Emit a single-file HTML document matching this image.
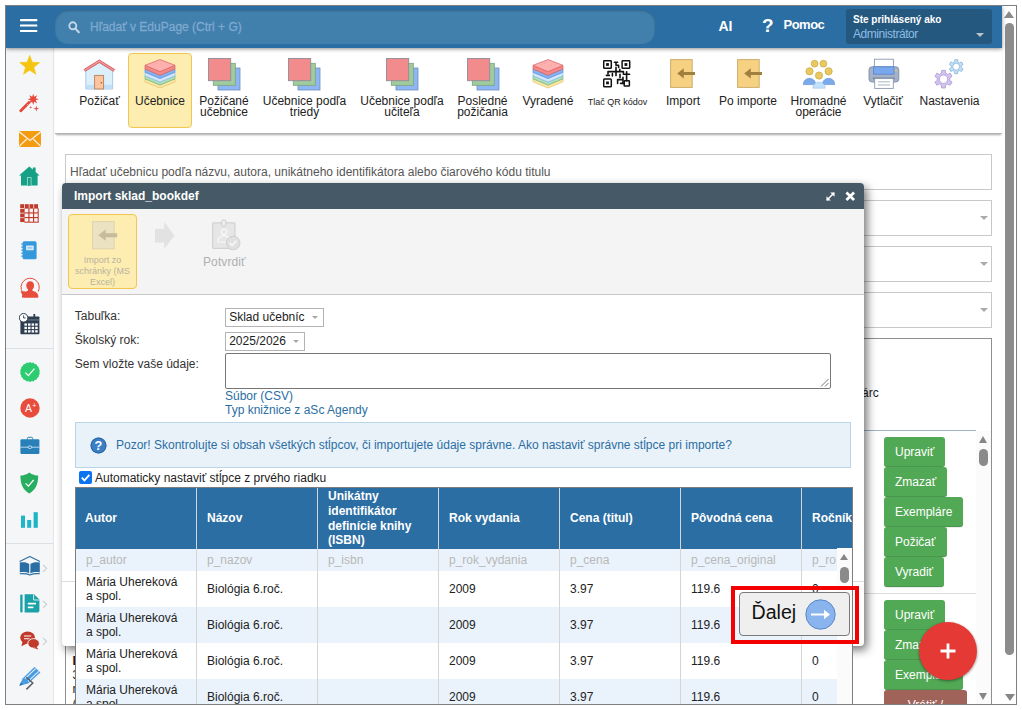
<!DOCTYPE html>
<html lang="sk">
<head>
<meta charset="utf-8">
<title>EduPage - Import</title>
<style>
*{box-sizing:border-box;margin:0;padding:0}
html,body{width:1022px;height:710px;overflow:hidden;background:#fff}
body{font-family:"Liberation Sans",sans-serif;font-size:12px;color:#333;position:relative}
.abs{position:absolute}
#frame{position:absolute;left:5px;top:5px;width:1012px;height:700px;border:1px solid #7e7e7e;overflow:hidden;background:#fff}
/* everything inside #frame is positioned in page coordinates minus (6,6) => use wrapper shifted */
#pg{position:absolute;left:-6px;top:-6px;width:1022px;height:710px}
#hdr{left:6px;top:6px;width:996px;height:42px;background:#2b6ea3;box-shadow:0 1px 4px rgba(0,0,0,.45);z-index:5}
#hsearch{left:55px;top:10px;width:600px;height:34px;border-radius:13px;background:#417fad;box-shadow:inset 0 1px 2px rgba(0,0,0,.22)}
#hsearch span{position:absolute;left:35px;top:10px;font-size:12px;color:#7faacf;white-space:nowrap;-webkit-text-stroke:.3px #7faacf}
.hw{color:#fff;font-weight:bold;white-space:nowrap}
#ubox{left:846px;top:9px;width:146px;height:35px;background:#24587f;border-radius:3px}
#side{left:6px;top:48px;width:48px;height:657px;background:#f5f6f8;border-right:1px solid #e3e5e8}
.sep{position:absolute;left:0;width:48px;height:1px;background:#dcdfe3}
.si{position:absolute;left:12px;width:24px;height:24px}
#ribbon{left:55px;top:48px;width:947px;height:86px;background:#fff;border-bottom:1px solid #b4b4b4;box-shadow:0 2px 2px -1px rgba(0,0,0,.35)}
.rb{position:absolute;top:96px;text-align:center;line-height:10.6px;font-size:12px;color:#222;white-space:nowrap;transform:translateX(-50%)}
.ri{position:absolute;top:58px;width:32px;height:32px}
.inp{position:absolute;left:65px;width:927px;height:36px;border:1px solid #c8c8c8;background:#fff}
.inp i{position:absolute;right:3.500px;top:15px;width:0;height:0;border-left:4px solid transparent;border-right:4px solid transparent;border-top:4px solid #aaa}
.gb{position:absolute;left:884px;height:29.600px;background:#52a955;border-radius:3px;color:#fff;font-size:12px;line-height:30.5px;padding-left:11px;white-space:nowrap;box-shadow:inset 0 -1px 0 rgba(0,0,0,.1),0 0.5px 0.5px rgba(0,0,0,.15)}
#dlg{left:62px;top:183px;width:802px;height:463px;background:#fff;box-shadow:3px 4px 10px 0 rgba(0,0,0,.55);border-radius:4px}
#dtitle{left:0;top:0;width:802px;height:26px;background:#455a66;border-radius:4px 4px 0 0;color:#fff;font-weight:bold;font-size:12px;line-height:27px;padding-left:12px}
#dtool{left:0;top:26px;width:802px;height:86px;background:#f4f4f4;border-bottom:1px solid #c8c8c8}
.lbl{position:absolute;left:12.800px;font-size:12px;color:#333;white-space:nowrap}
.sel{position:absolute;left:163px;height:19px;border:1px solid #b4b4b4;background:#fff;font-size:12px;line-height:17.500px;padding-left:3.200px;color:#222;white-space:nowrap}
.sel i{position:absolute;right:5px;top:7.500px;width:0;height:0;border-left:3.500px solid transparent;border-right:3.500px solid transparent;border-top:3.800px solid #a8a8a8}
.lnk{position:absolute;left:163px;color:#2b6ea3;font-size:12px;white-space:nowrap}
#tbl{left:75px;top:487px;width:778px;height:220px;overflow:hidden;background:#fff;border:1px solid #7d7d7d}
#tbl .th{position:absolute;top:0;height:61.200px;background:#2b6ea3;color:#fff;font-weight:bold;font-size:12px;border-left:1px solid #d5d5d5;padding-left:10px;line-height:14.6px;display:flex;align-items:center}
.row{position:absolute;left:0;width:761px}
.row span{position:absolute;top:0;height:100%;border-left:1px solid #d5d5d5;padding-left:10px;font-size:12px;color:#222;display:flex;align-items:center;line-height:14px;white-space:nowrap}
.row span:first-child{border-left:none}
.alt{background:#eaf3fc}
.ph span{color:#b8b8b8}
</style>
</head>
<body>
<div id="frame"><div id="pg">

<!-- HEADER -->
<div id="hdr" class="abs"></div>
<div class="abs" style="z-index:6;left:0;top:0">
  <svg class="abs" style="left:20px;top:19px" width="18" height="14" viewBox="0 0 18 14"><rect x="0" y="0.100" width="17.300" height="2.100" rx=".4" fill="#fff"/><rect x="0" y="5.500" width="17.300" height="2.100" rx=".4" fill="#fff"/><rect x="0" y="10.900" width="17.300" height="2.100" rx=".4" fill="#fff"/></svg>
  <div id="hsearch" class="abs">
    <svg class="abs" style="left:12.500px;top:11px;opacity:.68" width="12" height="13" viewBox="0 0 12 13"><circle cx="4.800" cy="4.800" r="3.500" fill="none" stroke="#fff" stroke-width="1.900"/><path d="M7.400 7.600l3.400 3.600" stroke="#fff" stroke-width="2.100" stroke-linecap="round"/></svg>
    <span>Hľadať v EduPage (Ctrl + G)</span>
  </div>
  <div class="abs hw" style="left:718.500px;top:17.500px;font-size:14px">AI</div>
  <div class="abs hw" style="left:762px;top:14.500px;font-size:19px">?</div>
  <div class="abs hw" style="left:783.500px;top:17px;font-size:13px;letter-spacing:-.5px">Pomoc</div>
  <div id="ubox" class="abs">
    <div class="abs hw" style="left:7px;top:5px;font-size:10px;letter-spacing:0">Ste prihlásený ako</div>
    <div class="abs" style="left:7px;top:18px;font-size:12px;color:#8fbde6;letter-spacing:-.45px">Administrátor</div>
    <i class="abs" style="left:130px;top:24px;width:0;height:0;border-left:4px solid transparent;border-right:4px solid transparent;border-top:4px solid #b9c4cc"></i>
  </div>
</div>

<!-- OUTER SCROLLBAR -->
<div class="abs" style="left:1002px;top:6px;width:14px;height:699px;background:#fff">
  <i class="abs" style="left:2px;top:5px;width:0;height:0;border-left:5px solid transparent;border-right:5px solid transparent;border-bottom:7px solid #8a8a8a"></i>
  <div class="abs" style="left:3.300px;top:17px;width:8.600px;height:632px;border-radius:4.300px;background:#8c8c8c"></div>
  <i class="abs" style="left:2.500px;top:688px;width:0;height:0;border-left:5px solid transparent;border-right:5px solid transparent;border-top:7px solid #868686"></i>
</div>

<!-- SIDEBAR -->
<div id="side" class="abs">
  <div class="sep" style="top:300px"></div>
  <div class="sep" style="top:495px"></div>
</div>

<!-- SIDEBAR ICONS -->
<svg class="abs" style="left:19px;top:54px" width="22" height="22" viewBox="0 0 22 22"><path d="M10.70 1.30L13.29 8.24L20.69 8.56L14.88 13.16L16.87 20.29L10.70 16.20L4.53 20.29L6.52 13.16L0.71 8.56L8.11 8.24Z" fill="#f5c40f" stroke="#f5c40f" stroke-width=".6" stroke-linejoin="round"/></svg>
<svg class="abs" style="left:19px;top:92px" width="22" height="21" viewBox="0 0 22 21"><path d="M1.800 18.800L10 10.400" stroke="#e8493a" stroke-width="2.800" stroke-linecap="round"/><path d="M8.300 12.200l1.700 1.700" stroke="#f5f6f8" stroke-width=".7"/><path d="M14.20 1.70L15.23 4.81L18.16 3.34L16.69 6.27L19.80 7.30L16.69 8.33L18.16 11.26L15.23 9.79L14.20 12.90L13.17 9.79L10.24 11.26L11.71 8.33L8.60 7.30L11.71 6.27L10.24 3.34L13.17 4.81Z" fill="#e8493a"/><path d="M17.30 13.60L17.94 15.96L20.30 16.60L17.94 17.24L17.30 19.60L16.66 17.24L14.30 16.60L16.66 15.96Z" fill="#e8493a"/><path d="M11.80 13.70L12.15 15.05L13.50 15.40L12.15 15.75L11.80 17.10L11.45 15.75L10.10 15.40L11.45 15.05Z" fill="#e8493a"/></svg>
<svg class="abs" style="left:18.5px;top:131px" width="22" height="16" viewBox="0 0 22 16"><rect x="0" y="0" width="22" height="16" fill="#f39c12"/><path d="M0 0.6L11 9.4 22 0.6" fill="none" stroke="#fdf1dc" stroke-width="1.3"/><path d="M0 15.6L7.8 8M22 15.6L14.2 8" stroke="#fdf1dc" stroke-width="1.1"/></svg>
<svg class="abs" style="left:19px;top:166px" width="21" height="20" viewBox="0 0 21 20"><path d="M0 9.6L10.3 0.6 13.8 3.6V1.4H16.6V6L20.6 9.6H18.6V19.6H2V9.6Z" fill="#16a085"/><rect x="8" y="11" width="4.6" height="8.6" fill="#8fd3c5"/><rect x="9" y="12" width="2.6" height="7.6" fill="#16a085"/></svg>
<svg class="abs" style="left:20.300px;top:204.400px" width="19" height="19" viewBox="0 0 19 19"><rect x="4.30" y="4.30" width="14.40" height="14.40" fill="#c0392b"/><rect x="0.20" y="0.20" width="3.900" height="3.900" fill="#c0392b"/><rect x="4.85" y="0.20" width="3.900" height="3.900" fill="#c0392b"/><rect x="9.50" y="0.20" width="3.900" height="3.900" fill="#c0392b"/><rect x="14.15" y="0.20" width="3.900" height="3.900" fill="#c0392b"/><rect x="0.20" y="4.85" width="3.900" height="3.900" fill="#c0392b"/><rect x="4.85" y="4.85" width="3.500" height="3.500" fill="#fdf4f3"/><rect x="9.50" y="4.85" width="3.500" height="3.500" fill="#fdf4f3"/><rect x="14.15" y="4.85" width="3.500" height="3.500" fill="#fdf4f3"/><rect x="0.20" y="9.50" width="3.900" height="3.900" fill="#c0392b"/><rect x="4.85" y="9.50" width="3.500" height="3.500" fill="#fdf4f3"/><rect x="9.50" y="9.50" width="3.500" height="3.500" fill="#fdf4f3"/><rect x="14.15" y="9.50" width="3.500" height="3.500" fill="#fdf4f3"/><rect x="0.20" y="14.15" width="3.900" height="3.900" fill="#c0392b"/><rect x="4.85" y="14.15" width="3.500" height="3.500" fill="#fdf4f3"/><rect x="9.50" y="14.15" width="3.500" height="3.500" fill="#fdf4f3"/><rect x="14.15" y="14.15" width="3.500" height="3.500" fill="#fdf4f3"/></svg>
<svg class="abs" style="left:21px;top:240.800px" width="16" height="19" viewBox="0 0 16 19"><rect x="1.600" y="0.300" width="14" height="18" rx="1.600" fill="#3498db"/><rect x="5" y="4.600" width="7.800" height="4.600" rx=".6" fill="#d4e9f8"/><rect x="6.600" y="6" width="4.600" height="1.700" fill="#9ccaf0"/><path d="M0.300 3.200h2.400M0.300 6.200h2.400M0.300 9.200h2.400M0.300 12.200h2.400M0.300 15.200h2.400" stroke="#3498db" stroke-width="1.200"/></svg>
<svg class="abs" style="left:19.500px;top:276.500px" width="20" height="22" viewBox="0 0 20 22"><path d="M2.600 15.400A9.100 9.100 0 1 1 18.200 14.600" fill="none" stroke="#e74c3c" stroke-width="1"/><path d="M0.400 14.400L3 18.400 5.200 14.200Z" fill="#e74c3c"/><path d="M10.200 4.200c2.400 0 3.900 1.800 3.900 4.200 0 1.600-.7 3.200-1.700 4v1.400c2.600.8 5.600 1.800 6 5.400 0 .7-.3 1.600-1 1.600H3c-.7 0-1-.9-1-1.600.4-3.600 3.400-4.600 6-5.400V12.400c-1-.8-1.700-2.400-1.700-4 0-2.400 1.500-4.200 3.900-4.200Z" fill="#e74c3c"/></svg>
<svg class="abs" style="left:19px;top:313px" width="21" height="22" viewBox="0 0 21 22"><rect x="1.4" y="3.4" width="19" height="17.8" rx=".8" fill="#2c3e50"/><rect x="14.4" y="1" width="1.8" height="4.6" fill="#2c3e50"/><rect x="8.500" y="6.600" width="11.900" height=".7" fill="#8e99a6"/><rect x="5.4" y="10.4" width="2.5" height="2.3" fill="#fff"/><rect x="9.0" y="10.4" width="2.5" height="2.3" fill="#fff"/><rect x="12.6" y="10.4" width="2.5" height="2.3" fill="#fff"/><rect x="16.2" y="10.4" width="2.5" height="2.3" fill="#fff"/><rect x="5.4" y="13.8" width="2.5" height="2.3" fill="#fff"/><rect x="9.0" y="13.8" width="2.5" height="2.3" fill="#fff"/><rect x="12.6" y="13.8" width="2.5" height="2.3" fill="#fff"/><rect x="16.2" y="13.8" width="2.5" height="2.3" fill="#fff"/><rect x="5.4" y="17.2" width="2.5" height="2.3" fill="#fff"/><rect x="9.0" y="17.2" width="2.5" height="2.3" fill="#fff"/><rect x="12.6" y="17.2" width="2.5" height="2.3" fill="#fff"/><rect x="16.2" y="17.2" width="2.5" height="2.3" fill="#fff"/><circle cx="4.6" cy="4.8" r="4.3" fill="#fff" stroke="#2c3e50" stroke-width="1"/><path d="M4.6 2.4V5h2" fill="none" stroke="#2c3e50" stroke-width=".9"/></svg>
<svg class="abs" style="left:19.5px;top:362px" width="20" height="20" viewBox="0 0 20 20"><path d="M10.00 0.00L11.60 0.94L13.42 0.60L14.60 2.03L16.43 2.34L17.05 4.09L18.66 5.00L18.65 6.85L19.85 8.26L19.20 10.00L19.85 11.74L18.65 13.15L18.66 15.00L17.05 15.91L16.43 17.66L14.60 17.97L13.42 19.40L11.60 19.06L10.00 20.00L8.40 19.06L6.58 19.40L5.40 17.97L3.57 17.66L2.95 15.91L1.34 15.00L1.35 13.15L0.15 11.74L0.80 10.00L0.15 8.26L1.35 6.85L1.34 5.00L2.95 4.09L3.57 2.34L5.40 2.03L6.58 0.60L8.40 0.94Z" fill="#2ecc71"/><circle cx="10" cy="10" r="9.3" fill="#2ecc71"/><path d="M5.400 10.600l3 3 6-7" fill="none" stroke="#fff" stroke-width="1.200"/></svg>
<svg class="abs" style="left:19.5px;top:398px" width="20" height="20" viewBox="0 0 20 20"><circle cx="10" cy="10" r="9.7" fill="#e74c3c"/><text x="8.6" y="14" font-family="Liberation Sans, sans-serif" font-size="10.5" fill="#fff" text-anchor="middle">A</text><text x="14.2" y="9.6" font-family="Liberation Sans, sans-serif" font-size="7" fill="#fff" text-anchor="middle">+</text></svg>
<svg class="abs" style="left:19.500px;top:436px" width="20" height="19" viewBox="0 0 20 19"><path d="M7.400 3.600V2.400Q7.400 1.300 8.500 1.300h3Q12.600 1.300 12.600 2.400V3.600" fill="none" stroke="#2980b9" stroke-width="1"/><rect x="0.400" y="3.200" width="19" height="14.800" rx="1.200" fill="#2980b9"/><path d="M0.400 11.200H19.400" stroke="#dcebf6" stroke-width=".8"/><ellipse cx="9.900" cy="11.200" rx="1.900" ry="1.300" fill="#2980b9" stroke="#dcebf6" stroke-width=".8"/></svg>
<svg class="abs" style="left:20px;top:471.500px" width="19" height="22" viewBox="0 0 19 22"><path d="M9.300.4C6.400 2.600 3.200 3.400.400 3.600c0 8.600 2.400 14.400 8.900 17.800 6.500-3.400 8.900-9.200 8.900-17.800C15.400 3.400 12.200 2.600 9.300.4Z" fill="#27ae60"/><path d="M5.600 11.400l2.800 2.800 5.200-6.200" fill="none" stroke="#fff" stroke-width="1.200"/></svg>
<svg class="abs" style="left:21px;top:511.5px" width="17" height="16" viewBox="0 0 17 16"><rect x="0" y="3.6" width="4" height="12.2" fill="#1cb5c9"/><rect x="6.2" y="8" width="4" height="7.800" fill="#1cb5c9"/><rect x="12.6" y="0.2" width="4.2" height="15.6" fill="#1cb5c9"/></svg>
<svg class="abs" style="left:19px;top:556px" width="22" height="20" viewBox="0 0 22 20"><path d="M0.6 5.400L10.800.5 21 5.400" fill="none" stroke="#2b6ea3" stroke-width="1.1"/><path d="M0.8 6.6c3.400-.6 7-.4 9.400 1.400V17.400c-2.400-1.400-6-1.600-9.400-1Z" fill="#2b6ea3"/><path d="M20.800 6.600c-3.400-.6-7-.4-9.400 1.400V17.400c2.400-1.400 6-1.600 9.400-1Z" fill="#2b6ea3"/><path d="M0.800 17.800c3.600-.4 6.800-.2 10 1.200 3.200-1.400 6.400-1.600 10-1.200" fill="none" stroke="#2b6ea3" stroke-width="1.100"/></svg>
<svg class="abs" style="left:41.800px;top:563.500px" width="6" height="9" viewBox="0 0 6 9"><path d="M1 .8l3.600 3.500-3.600 3.500" fill="none" stroke="#c9ccd0" stroke-width="1.100"/></svg>
<svg class="abs" style="left:20px;top:593.5px" width="20" height="19" viewBox="0 0 20 19"><rect x="0.200" y="0.600" width="2.400" height="17.800" rx="1" fill="#1ba1a8"/><path d="M4.600.3H14L19.400 5.600V16.400Q19.400 18.600 17.200 18.600H4.600Z" fill="#1ba1a8"/><path d="M13.600.6V6H19.200" fill="none" stroke="#e6f6f6" stroke-width=".9"/><path d="M7.800 9.600h8.200M7.800 13.400h5.600" stroke="#fff" stroke-width="1.700"/></svg>
<svg class="abs" style="left:41.800px;top:600.300px" width="6" height="9" viewBox="0 0 6 9"><path d="M1 .8l3.600 3.500-3.600 3.500" fill="none" stroke="#c9ccd0" stroke-width="1.100"/></svg>
<svg class="abs" style="left:20px;top:630.5px" width="20" height="19" viewBox="0 0 20 19"><ellipse cx="7.600" cy="6.600" rx="7.400" ry="6.200" fill="#c0392b"/><path d="M2.600 10.600L1.400 15.200 7 12.400Z" fill="#c0392b"/><path d="M4 5h7.200M4 7.800h5.600" stroke="#fff" stroke-width="1.100"/><ellipse cx="13.600" cy="12.400" rx="5.800" ry="4.800" fill="#c0392b" stroke="#f5f6f8" stroke-width="1"/><path d="M16.400 15.800L18.600 18.600 13.600 17Z" fill="#c0392b"/></svg>
<svg class="abs" style="left:41.800px;top:637.300px" width="6" height="9" viewBox="0 0 6 9"><path d="M1 .8l3.600 3.500-3.600 3.500" fill="none" stroke="#c9ccd0" stroke-width="1.100"/></svg>
<svg class="abs" style="left:19px;top:666px" width="22" height="25" viewBox="0 0 22 25"><path d="M0.400 19.800L3.600 12.400 15.400 1 21.400 6.600 9.200 17.600Z" fill="#4a9be0"/><path d="M6 12.600L16.600 2.600M9 15.400L19.800 5.400" stroke="#d9ebfa" stroke-width="1.200"/><path d="M0.400 19.800L1.800 16.600 4 18.600Z" fill="#2a6fb5"/><path d="M7.400 11.200l6.400 5.800-6.400 6.400" fill="none" stroke="#5a5f66" stroke-width="1.500"/></svg>

<!-- RIBBON -->
<div id="ribbon" class="abs"></div>
<div class="abs" style="left:128px;top:53px;width:64px;height:75px;background:#fdedb0;border:1px solid #f3c64f;border-radius:4px"></div>
<div class="rb" style="left:99.5px">Požičať</div>
<div class="rb" style="left:160px">Učebnice</div>
<div class="rb" style="left:224px">Požičané<br>učebnice</div>
<div class="rb" style="left:304.5px">Učebnice podľa<br>triedy</div>
<div class="rb" style="left:402px">Učebnice podľa<br>učiteľa</div>
<div class="rb" style="left:482.5px">Posledné<br>požičania</div>
<div class="rb" style="left:548px">Vyradené</div>
<div class="rb" style="left:617.5px;font-size:9px;top:97px">Tlač QR kódov</div>
<div class="rb" style="left:683px">Import</div>
<div class="rb" style="left:748px">Po importe</div>
<div class="rb" style="left:818.5px">Hromadné<br>operácie</div>
<div class="rb" style="left:883px">Vytlačiť</div>
<div class="rb" style="left:949.5px">Nastavenia</div>
<svg class="abs" style="left:83px;top:58px" width="32" height="32" viewBox="0 0 32 32"><path d="M2.800 12L16.300 3.800 29.600 12V31H2.800Z" fill="#dcf0fc" stroke="#a4c2e8" stroke-width=".9"/><rect x="3.200" y="26.800" width="26" height="3.800" fill="#c0e0f8"/><rect x="11.600" y="17.400" width="9" height="13.600" fill="#fcc59e" stroke="#b9805a" stroke-width=".9"/><circle cx="18.300" cy="24.800" r=".8" fill="#8a5a3a"/><path d="M1.400 12.600L16.300 3.200 31.200 12.600" fill="none" stroke="#d05a60" stroke-width="3" stroke-linejoin="miter"/><path d="M1.600 12.400L16.300 3.200 31 12.400" fill="none" stroke="#f59494" stroke-width="1.500" stroke-linejoin="miter"/></svg>
<svg class="abs" style="left:144px;top:58px" width="32" height="32" viewBox="0 0 32 32"><path d="M1 20.8L16 27.1 31 20.8V23.7L16 30.0 1 23.7Z" fill="#fdeaa6" stroke="#dcbc5c" stroke-width=".7" stroke-linejoin="round"/><path d="M1 17.7L16 24.0 31 17.7V20.8L16 27.1 1 20.8Z" fill="#b0dcb8" stroke="#6cb892" stroke-width=".7" stroke-linejoin="round"/><path d="M1 14.2L16 20.5 31 14.2V17.7L16 24.0 1 17.7Z" fill="#cfe8fd" stroke="#8fc0ee" stroke-width=".7" stroke-linejoin="round"/><path d="M1 11.0L16 17.3 31 11.0V14.2L16 20.5 1 14.2Z" fill="#86b2f2" stroke="#5f8fdc" stroke-width=".7" stroke-linejoin="round"/><path d="M1 7.3L16 13.6 31 7.3V11.0L16 17.3 1 11.0Z" fill="#f28888" stroke="#d86060" stroke-width=".7" stroke-linejoin="round"/><path d="M16 1.600L31 7.300 16 13.600 1 7.300Z" fill="#fcb0b0" stroke="#e26a6a" stroke-width=".8" stroke-linejoin="round"/><circle cx="9.500" cy="6.500" r=".45" fill="#ee8f8f"/><circle cx="19.500" cy="7.300" r=".45" fill="#ee8f8f"/><circle cx="12.500" cy="5.500" r=".45" fill="#ee8f8f"/><circle cx="23.500" cy="6.600" r=".45" fill="#ee8f8f"/></svg>
<svg class="abs" style="left:208px;top:58px" width="33" height="33" viewBox="0 0 33 33"><rect x="10" y="10" width="22" height="22" fill="#8db6f2" stroke="#6d8fc0" stroke-width=".8"/><rect x="5.3" y="5.3" width="22" height="22" fill="#9fcb9f" stroke="#7da37d" stroke-width=".8"/><rect x=".5" y=".5" width="22.2" height="22.2" fill="#f28c8c" stroke="#8f8c9a" stroke-width=".9"/></svg>
<svg class="abs" style="left:288px;top:58px" width="33" height="33" viewBox="0 0 33 33"><rect x="10" y="10" width="22" height="22" fill="#8db6f2" stroke="#6d8fc0" stroke-width=".8"/><rect x="5.3" y="5.3" width="22" height="22" fill="#9fcb9f" stroke="#7da37d" stroke-width=".8"/><rect x=".5" y=".5" width="22.2" height="22.2" fill="#f28c8c" stroke="#8f8c9a" stroke-width=".9"/></svg>
<svg class="abs" style="left:386px;top:58px" width="33" height="33" viewBox="0 0 33 33"><rect x="10" y="10" width="22" height="22" fill="#8db6f2" stroke="#6d8fc0" stroke-width=".8"/><rect x="5.3" y="5.3" width="22" height="22" fill="#9fcb9f" stroke="#7da37d" stroke-width=".8"/><rect x=".5" y=".5" width="22.2" height="22.2" fill="#f28c8c" stroke="#8f8c9a" stroke-width=".9"/></svg>
<svg class="abs" style="left:467px;top:58px" width="33" height="33" viewBox="0 0 33 33"><rect x="10" y="10" width="22" height="22" fill="#8db6f2" stroke="#6d8fc0" stroke-width=".8"/><rect x="5.3" y="5.3" width="22" height="22" fill="#9fcb9f" stroke="#7da37d" stroke-width=".8"/><rect x=".5" y=".5" width="22.2" height="22.2" fill="#f28c8c" stroke="#8f8c9a" stroke-width=".9"/></svg>
<svg class="abs" style="left:532.300px;top:58px" width="32" height="32" viewBox="0 0 32 32"><path d="M1 20.8L16 27.1 31 20.8V23.7L16 30.0 1 23.7Z" fill="#fdeaa6" stroke="#dcbc5c" stroke-width=".7" stroke-linejoin="round"/><path d="M1 17.7L16 24.0 31 17.7V20.8L16 27.1 1 20.8Z" fill="#b0dcb8" stroke="#6cb892" stroke-width=".7" stroke-linejoin="round"/><path d="M1 14.2L16 20.5 31 14.2V17.7L16 24.0 1 17.7Z" fill="#cfe8fd" stroke="#8fc0ee" stroke-width=".7" stroke-linejoin="round"/><path d="M1 11.0L16 17.3 31 11.0V14.2L16 20.5 1 14.2Z" fill="#86b2f2" stroke="#5f8fdc" stroke-width=".7" stroke-linejoin="round"/><path d="M1 7.3L16 13.6 31 7.3V11.0L16 17.3 1 11.0Z" fill="#f28888" stroke="#d86060" stroke-width=".7" stroke-linejoin="round"/><path d="M16 1.600L31 7.300 16 13.600 1 7.300Z" fill="#fcb0b0" stroke="#e26a6a" stroke-width=".8" stroke-linejoin="round"/><circle cx="9.500" cy="6.500" r=".45" fill="#ee8f8f"/><circle cx="19.500" cy="7.300" r=".45" fill="#ee8f8f"/><circle cx="12.500" cy="5.500" r=".45" fill="#ee8f8f"/><circle cx="23.500" cy="6.600" r=".45" fill="#ee8f8f"/></svg>
<svg class="abs" style="left:603.200px;top:60.200px" width="28" height="28" viewBox="0 0 28 28"><rect x="0.7" y="0.7" width="7.6" height="7.6" rx=".8" fill="#fff" stroke="#111" stroke-width="1.500"/><rect x="3.1" y="3.1" width="2.8" height="2.8" fill="#111"/><rect x="19.099999999999998" y="0.7" width="7.6" height="7.6" rx=".8" fill="#fff" stroke="#111" stroke-width="1.500"/><rect x="21.5" y="3.1" width="2.8" height="2.8" fill="#111"/><rect x="0.7" y="19.099999999999998" width="7.6" height="7.6" rx=".8" fill="#fff" stroke="#111" stroke-width="1.500"/><rect x="3.1" y="21.5" width="2.8" height="2.8" fill="#111"/><rect x="21.200" y="20.800" width="5.200" height="5.200" rx=".6" fill="#fff" stroke="#111" stroke-width="1.500"/><path d="M11.400 2.200h3.200M13 2.200V5.200M13 5.200h2.600V7.400M13 7.400V15.600M5 13.800V11.600H16.800V9.400M3.400 15.400h3M9.400 13.600V16M16.800 11.600H20.400V14.200M20.400 14.200H26.600M23.600 11.800V20.800M17 14.200v3.400M14.600 19.600H20M14.600 19.600V23.400M17.600 23.400H21.200M20 17.400V23.400" fill="none" stroke="#111" stroke-width="1.600" stroke-linecap="round" stroke-linejoin="round"/></svg>
<svg class="abs" style="left:670.300px;top:58.600px" width="26" height="30" viewBox="0 0 26 30"><rect x=".6" y=".6" width="21.6" height="27.8" fill="#f6d182" stroke="#cfae6a" stroke-width="1"/><path d="M7.2 14.4L13.8 9.2V13H25V15.9H13.8V19.6Z" fill="#a17f3f"/></svg>
<svg class="abs" style="left:737px;top:59px" width="26" height="30" viewBox="0 0 26 30"><rect x=".6" y=".6" width="21.6" height="27.8" fill="#f6d182" stroke="#cfae6a" stroke-width="1"/><path d="M7.2 14.4L13.8 9.2V13H25V15.9H13.8V19.6Z" fill="#a17f3f"/></svg>
<svg class="abs" style="left:803px;top:58px" width="32" height="32" viewBox="0 0 32 32"><path d="M0.2 26.6a6.3 6.3 0 0 1 12.6 0Z" fill="#7aa9ec" stroke="#5c8bd0" stroke-width=".6"/><path d="M19.3 26.6a6.3 6.3 0 0 1 12.6 0Z" fill="#7aa9ec" stroke="#5c8bd0" stroke-width=".6"/><path d="M9.8 30.2a6.2 6.2 0 0 1 12.4 0Z" fill="#c2e0fa" stroke="#9cc4e8" stroke-width=".6"/><circle cx="11.6" cy="5.7" r="3.4" fill="#e9c95f" stroke="#c9a640" stroke-width=".7"/><circle cx="20.4" cy="5.7" r="3.4" fill="#e9c95f" stroke="#c9a640" stroke-width=".7"/><circle cx="6.5" cy="13.3" r="3.6" fill="#e9c95f" stroke="#c9a640" stroke-width=".7"/><circle cx="25.6" cy="13.3" r="3.6" fill="#e9c95f" stroke="#c9a640" stroke-width=".7"/><circle cx="16" cy="17.6" r="3.6" fill="#e9c95f" stroke="#c9a640" stroke-width=".7"/></svg>
<svg class="abs" style="left:867.5px;top:58px" width="32" height="32" viewBox="0 0 32 32"><rect x="6.4" y="1.2" width="19" height="9" fill="#fff" stroke="#8a98ae" stroke-width=".9"/><rect x="1" y="8.8" width="29.8" height="15.2" rx="3" fill="#a4b2c8" stroke="#7f8ea8" stroke-width=".9"/><rect x="5.6" y="8.8" width="20.4" height="7.4" fill="#79a8ee" stroke="#5a84cc" stroke-width=".8"/><rect x="5" y="19.6" width="21.8" height="1.6" fill="#6e7c94"/><rect x="6.7" y="20.6" width="18.6" height="9.8" fill="#fff" stroke="#8a98ae" stroke-width=".9"/><path d="M10 23.8h12M10 27h12" stroke="#a9b4c4" stroke-width="1"/><circle cx="28" cy="12.6" r=".9" fill="#f3d35a"/></svg>
<svg class="abs" style="left:933px;top:58px" width="32" height="32" viewBox="0 0 32 32"><path d="M12.37 30.00L8.63 30.00L8.52 27.29L6.22 25.96L3.81 27.22L1.94 23.98L4.24 22.53L4.24 19.87L1.94 18.42L3.81 15.18L6.22 16.44L8.52 15.11L8.63 12.40L12.37 12.40L12.48 15.11L14.78 16.44L17.19 15.18L19.06 18.42L16.76 19.87L16.76 22.53L19.06 23.98L17.19 27.22L14.78 25.96L12.48 27.29Z" fill="#d3c4ee" stroke="#ab97d4" stroke-width=".8" stroke-linejoin="round"/><circle cx="10.5" cy="21.2" r="4.2" fill="#fff" stroke="#ab97d4" stroke-width=".8"/><path d="M24.70 15.74L21.70 15.74L21.62 13.55L19.79 12.49L17.85 13.52L16.35 10.92L18.21 9.76L18.21 7.64L16.35 6.48L17.85 3.88L19.79 4.91L21.62 3.85L21.70 1.66L24.70 1.66L24.78 3.85L26.61 4.91L28.55 3.88L30.05 6.48L28.19 7.64L28.19 9.76L30.05 10.92L28.55 13.52L26.61 12.49L24.78 13.55Z" fill="#c3e1f7" stroke="#86b3db" stroke-width=".8" stroke-linejoin="round"/><circle cx="23.2" cy="8.7" r="3.5" fill="#fff" stroke="#86b3db" stroke-width=".8"/></svg>

<!-- PAGE CONTENT BEHIND DIALOG -->
<div class="inp" style="top:154px"><span style="position:absolute;left:4px;top:9.500px;font-size:12px;color:#555;white-space:nowrap">Hľadať učebnicu podľa názvu, autora, unikátneho identifikátora alebo čiarového kódu titulu</span></div>
<div class="inp" style="top:200px"><i></i></div>
<div class="inp" style="top:246px"><i></i></div>
<div class="inp" style="top:292px"><i></i></div>
<div class="abs" style="left:65px;top:338px;width:927px;height:380px;border:1px solid #8f8f8f;background:#fff"></div>
<div class="abs" style="left:72.500px;top:654px;font-size:12px;line-height:14.200px;color:#1a1a1a;white-space:nowrap"><b>Biológia 6.roč.</b><br>3.97 €<br>rok vydania 2009<br>(0 / 12)</div>
<div class="abs" style="left:862px;top:386px;font-size:12px;color:#222">árc</div>
<div class="abs" style="left:864px;top:430px;width:112px;height:1px;background:#9fb3c8"></div>
<div class="abs" style="left:864px;top:593px;width:112px;height:1px;background:#dedede"></div>
<div class="gb" style="top:437px;width:61px">Upraviť</div>
<div class="gb" style="top:467px;width:63px">Zmazať</div>
<div class="gb" style="top:497px;width:79px">Exempláre</div>
<div class="gb" style="top:527px;width:63px">Požičať</div>
<div class="gb" style="top:557px;width:60px">Vyradiť</div>
<div class="gb" style="top:600px;width:61px">Upraviť</div>
<div class="gb" style="top:630px;width:63px">Zmazať</div>
<div class="gb" style="top:660px;width:79px">Exempláre</div>
<div class="gb" style="top:690px;width:83px;background:#a0635a;text-align:center;padding-left:0;line-height:31px">Vrátiť /</div>
<!-- inner scrollbar -->
<div class="abs" style="left:976px;top:431px;width:15px;height:274px;background:#fbfbfb">
  <i class="abs" style="left:2.800px;top:5px;width:0;height:0;border-left:4.800px solid transparent;border-right:4.800px solid transparent;border-bottom:7px solid #868686"></i>
  <div class="abs" style="left:3px;top:18px;width:9.200px;height:17px;border-radius:4.600px;background:#8a8a8a"></div>
  <i class="abs" style="left:2.800px;top:262px;width:0;height:0;border-left:4.800px solid transparent;border-right:4.800px solid transparent;border-top:7px solid #868686"></i>
</div>
<!-- FAB -->
<div class="abs" style="left:919px;top:622px;width:58px;height:58px;border-radius:50%;background:#e53935;box-shadow:0 1px 3px rgba(0,0,0,.45);z-index:3">
  <svg width="58" height="58" viewBox="0 0 58 58"><path d="M29 21.5v15M21.5 29h15" stroke="#fff" stroke-width="2.800"/></svg>
</div>

<!-- DIALOG -->
<div id="dlg" class="abs">
  <div class="abs" style="left:0;top:398px;width:802px;height:1px;background:#dcdcdc"></div>
  <div id="dtitle" class="abs">Import sklad_bookdef</div>
  <!-- title icons -->
  <svg class="abs" style="left:763.500px;top:8.500px" width="9" height="9" viewBox="0 0 11 11"><path d="M1 10L10 1" stroke="#fff" stroke-width="1.8"/><path d="M5.2 0.6H10.4V5.8Z M0.6 5.2V10.4H5.8Z" fill="#fff"/></svg>
  <svg class="abs" style="left:783.300px;top:8px" width="10.500" height="10.500" viewBox="0 0 11 11"><path d="M1.5 1.5l8 8M9.5 1.5l-8 8" stroke="#fff" stroke-width="2.8"/></svg>
  <div id="dtool" class="abs">
    <div class="abs" style="left:6px;top:5px;width:69px;height:75px;background:#fdedb0;border:1px solid #f3c64f;border-radius:4px"></div>
    <div class="abs" style="left:4px;top:45.5px;width:73px;text-align:center;font-size:9px;line-height:11.4px;color:#b9b2a0">Import zo<br>schránky (MS<br>Excel)</div>
    <svg class="abs" style="left:29.500px;top:11.500px" width="28" height="29" viewBox="0 0 28 29"><rect x=".6" y=".6" width="21.600" height="27.200" fill="#ebe2c1" stroke="#ddd3b1" stroke-width="1"/><path d="M6.400 14.200L13.600 8.600V12.200H25.200V16.200H13.600V19.800Z" fill="#c6bb9a"/></svg>
    <svg class="abs" style="left:93px;top:12.500px" width="20" height="28" viewBox="0 0 20 28"><path d="M0 6.800H9.200V0L19.600 13.400 9.200 26.800V20.600H0Z" fill="#e2e2e2"/></svg>
    <svg class="abs" style="left:149px;top:10px" width="32" height="32" viewBox="0 0 32 32"><rect x="1.600" y="3.800" width="22.400" height="25.600" rx="1" fill="#e6e6e6" stroke="#d2d2d2" stroke-width="1.200"/><rect x="10.600" y=".800" width="4.400" height="6.400" rx="2.200" fill="#f0f0f0" stroke="#cbcbcb" stroke-width="1"/><circle cx="13" cy="12.800" r="2.700" fill="#e6e6e6" stroke="#f8f8f8" stroke-width="1.200"/><path d="M6.600 23a6.400 6.400 0 0 1 12.800 0Z" fill="#e6e6e6" stroke="#f8f8f8" stroke-width="1.200"/><circle cx="22.200" cy="24" r="6.800" fill="#e0e0e0" stroke="#cfcfcf" stroke-width="1"/><path d="M18.800 24l2.400 2.500 4.200-4.900" fill="none" stroke="#f8f8f8" stroke-width="1.600"/></svg>
    <div class="abs" style="left:141px;top:45.5px;font-size:12px;color:#b0b0b0;letter-spacing:.1px">Potvrdiť</div>
  </div>
  <div class="lbl" style="top:126px">Tabuľka:</div>
  <div class="sel" style="top:124.700px;width:99px">Sklad učebníc<i></i></div>
  <div class="lbl" style="top:150px">Školský rok:</div>
  <div class="sel" style="top:148.500px;width:80px">2025/2026<i></i></div>
  <div class="lbl" style="top:174px">Sem vložte vaše údaje:</div>
  <div class="abs" style="left:163px;top:170px;width:606px;height:36px;border:1px solid #767676;border-radius:2px;background:#fff">
    <svg class="abs" style="right:1px;bottom:1px" width="9" height="9" viewBox="0 0 9 9"><path d="M8.5 1L1 8.5M8.5 5L5 8.5" stroke="#777" stroke-width="1"/></svg>
  </div>
  <div class="lnk" style="top:206px">Súbor (CSV)</div>
  <div class="lnk" style="top:220px">Typ knižnice z aSc Agendy</div>
  <div class="abs" style="left:13px;top:239px;width:776px;height:46px;background:#e9f2f9;border:1px solid #b9d6e8"></div>
  <svg class="abs" style="left:27.600px;top:253.800px" width="17" height="17" viewBox="0 0 14 14"><circle cx="7" cy="7" r="6.6" fill="#3b7fc4"/><circle cx="7" cy="7" r="6.1" fill="none" stroke="#2a62a0" stroke-width=".8"/><text x="7" y="10.8" font-family="Liberation Sans, sans-serif" font-weight="bold" font-size="10.5" fill="#fff" text-anchor="middle">?</text></svg>
  <div class="abs" style="left:54px;top:255px;font-size:12px;color:#2b6ea3;white-space:nowrap">Pozor! Skontrolujte si obsah všetkých stĺpcov, či importujete údaje správne. Ako nastaviť správne stĺpce pri importe?</div>
  <div class="abs" style="left:17.200px;top:287.800px;width:13px;height:13px;background:#0b73f0;border-radius:2px"><svg width="13" height="13" viewBox="0 0 12 12"><path d="M2.6 6.2l2.4 2.4 4.6-5" fill="none" stroke="#fff" stroke-width="1.7"/></svg></div>
  <div class="abs" style="left:33px;top:288px;font-size:12px;color:#222;white-space:nowrap">Automaticky nastaviť stĺpce z prvého riadku</div>
</div>

<!-- TABLE -->
<div id="tbl" class="abs" style="z-index:2">
  <div class="th" style="left:-1px;width:121px;padding-left:10px;border-left:none">Autor</div>
  <div class="th" style="left:120px;width:121px">Názov</div>
  <div class="th" style="left:241px;width:121px">Unikátny<br>identifikátor<br>definície knihy<br>(ISBN)</div>
  <div class="th" style="left:362px;width:121px">Rok vydania</div>
  <div class="th" style="left:483px;width:121px">Cena (titul)</div>
  <div class="th" style="left:604px;width:121px">Pôvodná cena</div>
  <div class="th" style="left:725px;width:53px">Ročník</div>
  <div class="row alt ph" style="top:61.200px;height:21.600px"><span style="left:0px;width:120px;padding-left:10px">p_autor</span><span style="left:120px;width:121px">p_nazov</span><span style="left:241px;width:121px">p_isbn</span><span style="left:362px;width:121px">p_rok_vydania</span><span style="left:483px;width:121px">p_cena</span><span style="left:604px;width:121px">p_cena_original</span><span style="left:725px;width:35px">p_ro</span></div>
  <div class="row " style="top:82.8px;height:36.1px"><span style="left:0px;width:120px;padding-left:10px">Mária Uhereková<br>a spol.</span><span style="left:120px;width:121px">Biológia 6.roč.</span><span style="left:241px;width:121px"></span><span style="left:362px;width:121px">2009</span><span style="left:483px;width:121px">3.97</span><span style="left:604px;width:121px">119.6</span><span style="left:725px;width:35px">0</span></div>
  <div class="row alt" style="top:118.9px;height:36.1px"><span style="left:0px;width:120px;padding-left:10px">Mária Uhereková<br>a spol.</span><span style="left:120px;width:121px">Biológia 6.roč.</span><span style="left:241px;width:121px"></span><span style="left:362px;width:121px">2009</span><span style="left:483px;width:121px">3.97</span><span style="left:604px;width:121px">119.6</span><span style="left:725px;width:35px">0</span></div>
  <div class="row " style="top:155.0px;height:36.1px"><span style="left:0px;width:120px;padding-left:10px">Mária Uhereková<br>a spol.</span><span style="left:120px;width:121px">Biológia 6.roč.</span><span style="left:241px;width:121px"></span><span style="left:362px;width:121px">2009</span><span style="left:483px;width:121px">3.97</span><span style="left:604px;width:121px">119.6</span><span style="left:725px;width:35px">0</span></div>
  <div class="row alt" style="top:191.1px;height:36.1px"><span style="left:0px;width:120px;padding-left:10px">Mária Uhereková<br>a spol.</span><span style="left:120px;width:121px">Biológia 6.roč.</span><span style="left:241px;width:121px"></span><span style="left:362px;width:121px">2009</span><span style="left:483px;width:121px">3.97</span><span style="left:604px;width:121px">119.6</span><span style="left:725px;width:35px">0</span></div>
  <div class="abs" style="left:760.500px;top:60.400px;width:16px;height:160px;background:#fbfbfb">
    <i class="abs" style="left:3.300px;top:5.600px;width:0;height:0;border-left:4.700px solid transparent;border-right:4.700px solid transparent;border-bottom:6.500px solid #868686"></i>
    <div class="abs" style="left:3.400px;top:18.600px;width:9.200px;height:16.200px;border-radius:4.600px;background:#8a8a8a"></div>
  </div>
</div>
<!-- DALEJ -->
<div class="abs" style="left:739px;top:592px;width:111px;height:44px;border:1px solid #7a7a7a;border-radius:4px;background:#efefef;z-index:4">
  <div class="abs" style="left:11.5px;top:7.5px;font-size:19.6px;color:#111;white-space:nowrap">Ďalej</div>
  <svg class="abs" style="left:65px;top:5.5px" width="31" height="31" viewBox="0 0 31 31"><circle cx="15.5" cy="15.5" r="14.7" fill="#8ab4ee" stroke="#5c86c8" stroke-width="1"/><path d="M6 15.5h17" fill="none" stroke="#fff" stroke-width="2"/><path d="M19 10.800L25 15.500 19 20.200Z" fill="#fff"/></svg>
</div>
<div class="abs" style="left:731px;top:586px;width:128px;height:58px;border:4px solid #f40000;z-index:5"></div>

</div></div>
</body>
</html>
